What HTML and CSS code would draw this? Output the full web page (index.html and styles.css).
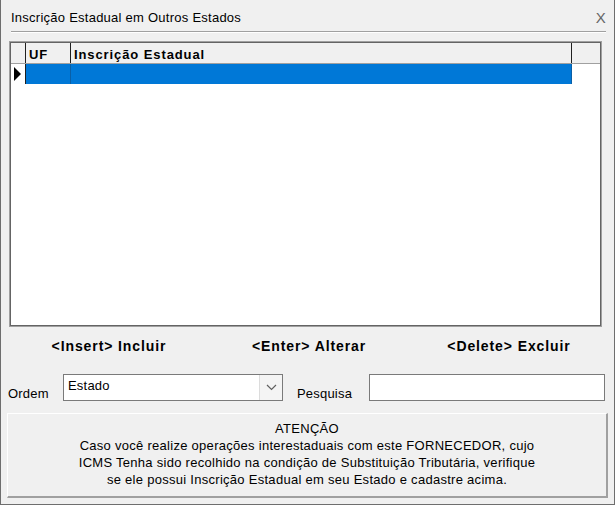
FILE: index.html
```html
<!DOCTYPE html>
<html lang="pt-BR">
<head>
    <meta charset="UTF-8">
    <title>Inscrição Estadual em Outros Estados</title>
    <link rel="stylesheet" href="styles.css">
</head>
<body>
    <div class="window">
        <div class="title-bar">
            <span class="title">Inscrição Estadual em Outros Estados</span>
            <span class="close">X</span>
        </div>
        <div class="rule"></div>

        <div class="grid">
            <div class="grid-row grid-head">
                <div class="cell cell-ind"></div>
                <div class="cell cell-uf">UF</div>
                <div class="cell cell-ie">Inscrição Estadual</div>
            </div>
            <div class="grid-row grid-selected">
                <div class="cell cell-ind"><span class="pointer"></span></div>
                <div class="cell cell-uf"></div>
                <div class="cell cell-ie"></div>
            </div>
        </div>

        <div class="actions">
            <span>&lt;Insert&gt; Incluir</span>
            <span>&lt;Enter&gt; Alterar</span>
            <span>&lt;Delete&gt; Excluir</span>
        </div>

        <div class="filters">
            <label class="label label-ordem">Ordem</label>
            <div class="select">
                <span class="select-value">Estado</span>
                <span class="select-button">
                    <svg width="11" height="7" viewBox="0 0 11 7">
                        <polyline points="1,1 5.5,5.5 10,1" fill="none" stroke="#606060" stroke-width="1.2"/>
                    </svg>
                </span>
            </div>
            <label class="label label-pesquisa">Pesquisa</label>
            <div class="search"></div>
        </div>

        <div class="notice">
            <p>ATENÇÃO</p>
            <p>Caso você realize operações interestaduais com este FORNECEDOR, cujo</p>
            <p>ICMS Tenha sido recolhido na condição de Substituição Tributária, verifique</p>
            <p>se ele possui Inscrição Estadual em seu Estado e cadastre acima.</p>
        </div>
    </div>
</body>
</html>
```

FILE: styles.css
```css
body {
    margin: 0;
    padding: 0;
    font-family: "Liberation Sans", Arial, sans-serif;
    font-size: 13px;
    letter-spacing: 0.2px;
    color: #000;
    background: #f0f0f0;
}

.window {
    width: 615px;
    height: 505px;
    box-sizing: border-box;
    background: #f0f0f0;
    border-left: 1px solid #6e6e6e;
    border-right: 1px solid #6e6e6e;
    border-bottom: 1px solid #6e6e6e;
    overflow: hidden;
}

.title-bar {
    display: flex;
    justify-content: space-between;
    align-items: center;
    height: 31px;
    padding: 3px 8px 0 10px;
    box-sizing: border-box;
}

.title {
    letter-spacing: 0.25px;
}

.close {
    font-size: 15px;
    color: #666;
}

.rule {
    margin: 0 8px 0 10px;
    border-top: 1px solid #a0a0a0;
    border-bottom: 1px solid #fff;
}

.grid {
    width: 593px;
    height: 286px;
    margin: 8px 0 0 8px;
    box-sizing: border-box;
    background: #fff;
    border: 1px solid #a0a0a0;
    box-shadow: inset 0 0 0 1px #646464;
    padding: 1px;
}

.grid-row {
    display: flex;
}

.cell {
    box-sizing: border-box;
    border-right: 1px solid #202020;
}

.cell-ind {
    width: 15px;
}

.cell-uf {
    width: 45px;
}

.cell-ie {
    width: 501px;
}

.grid-head {
    height: 21px;
    box-sizing: border-box;
    background: #f0f0f0;
    border-bottom: 1px solid #a0a0a0;
    font-weight: bold;
    letter-spacing: 0.9px;
    line-height: 23px;
}

.grid-head .cell-uf,
.grid-head .cell-ie {
    padding-left: 3px;
}

.grid-selected {
    height: 20px;
}

.grid-selected .cell-uf,
.grid-selected .cell-ie {
    background: #0078d7;
    border-right-color: #0a5fa6;
}

.grid-selected .cell-ind {
    display: flex;
    align-items: center;
    padding-left: 3px;
}

.pointer {
    width: 0;
    height: 0;
    border-top: 7px solid transparent;
    border-bottom: 7px solid transparent;
    border-left: 7px solid #000;
}

.actions {
    display: grid;
    grid-template-columns: repeat(3, 200px);
    margin: 10px 0 0 8px;
    height: 18px;
    line-height: 18px;
    text-align: center;
    font-size: 14px;
    font-weight: bold;
    letter-spacing: 0.9px;
}

.filters {
    display: flex;
    align-items: flex-end;
    margin: 19px 0 0 7px;
    height: 27px;
}

.label {
    line-height: 16px;
    margin-bottom: -1px;
}

.label-ordem {
    width: 55px;
}

.label-pesquisa {
    margin-left: 14px;
    width: 72px;
}

.select {
    display: flex;
    justify-content: space-between;
    width: 220px;
    height: 27px;
    box-sizing: border-box;
    border: 1px solid #7a7a7a;
    background: #fff;
}

.select-value {
    padding: 3px 0 0 4px;
}

.select-button {
    width: 22px;
    display: flex;
    align-items: center;
    justify-content: center;
    border-left: 1px solid #dcdcdc;
    background: #f4f4f4;
}

.search {
    width: 236px;
    height: 27px;
    box-sizing: border-box;
    border: 1px solid #7a7a7a;
    background: #fff;
}

.notice {
    width: 601px;
    height: 85px;
    margin: 12px 0 0 6px;
    box-sizing: border-box;
    padding-top: 6px;
    border-top: 1px solid #fff;
    border-left: 1px solid #fff;
    border-right: 2px solid #a0a0a0;
    border-bottom: 2px solid #a0a0a0;
    text-align: center;
    line-height: 17px;
    letter-spacing: 0.28px;
}

.notice p {
    margin: 0;
}
```
